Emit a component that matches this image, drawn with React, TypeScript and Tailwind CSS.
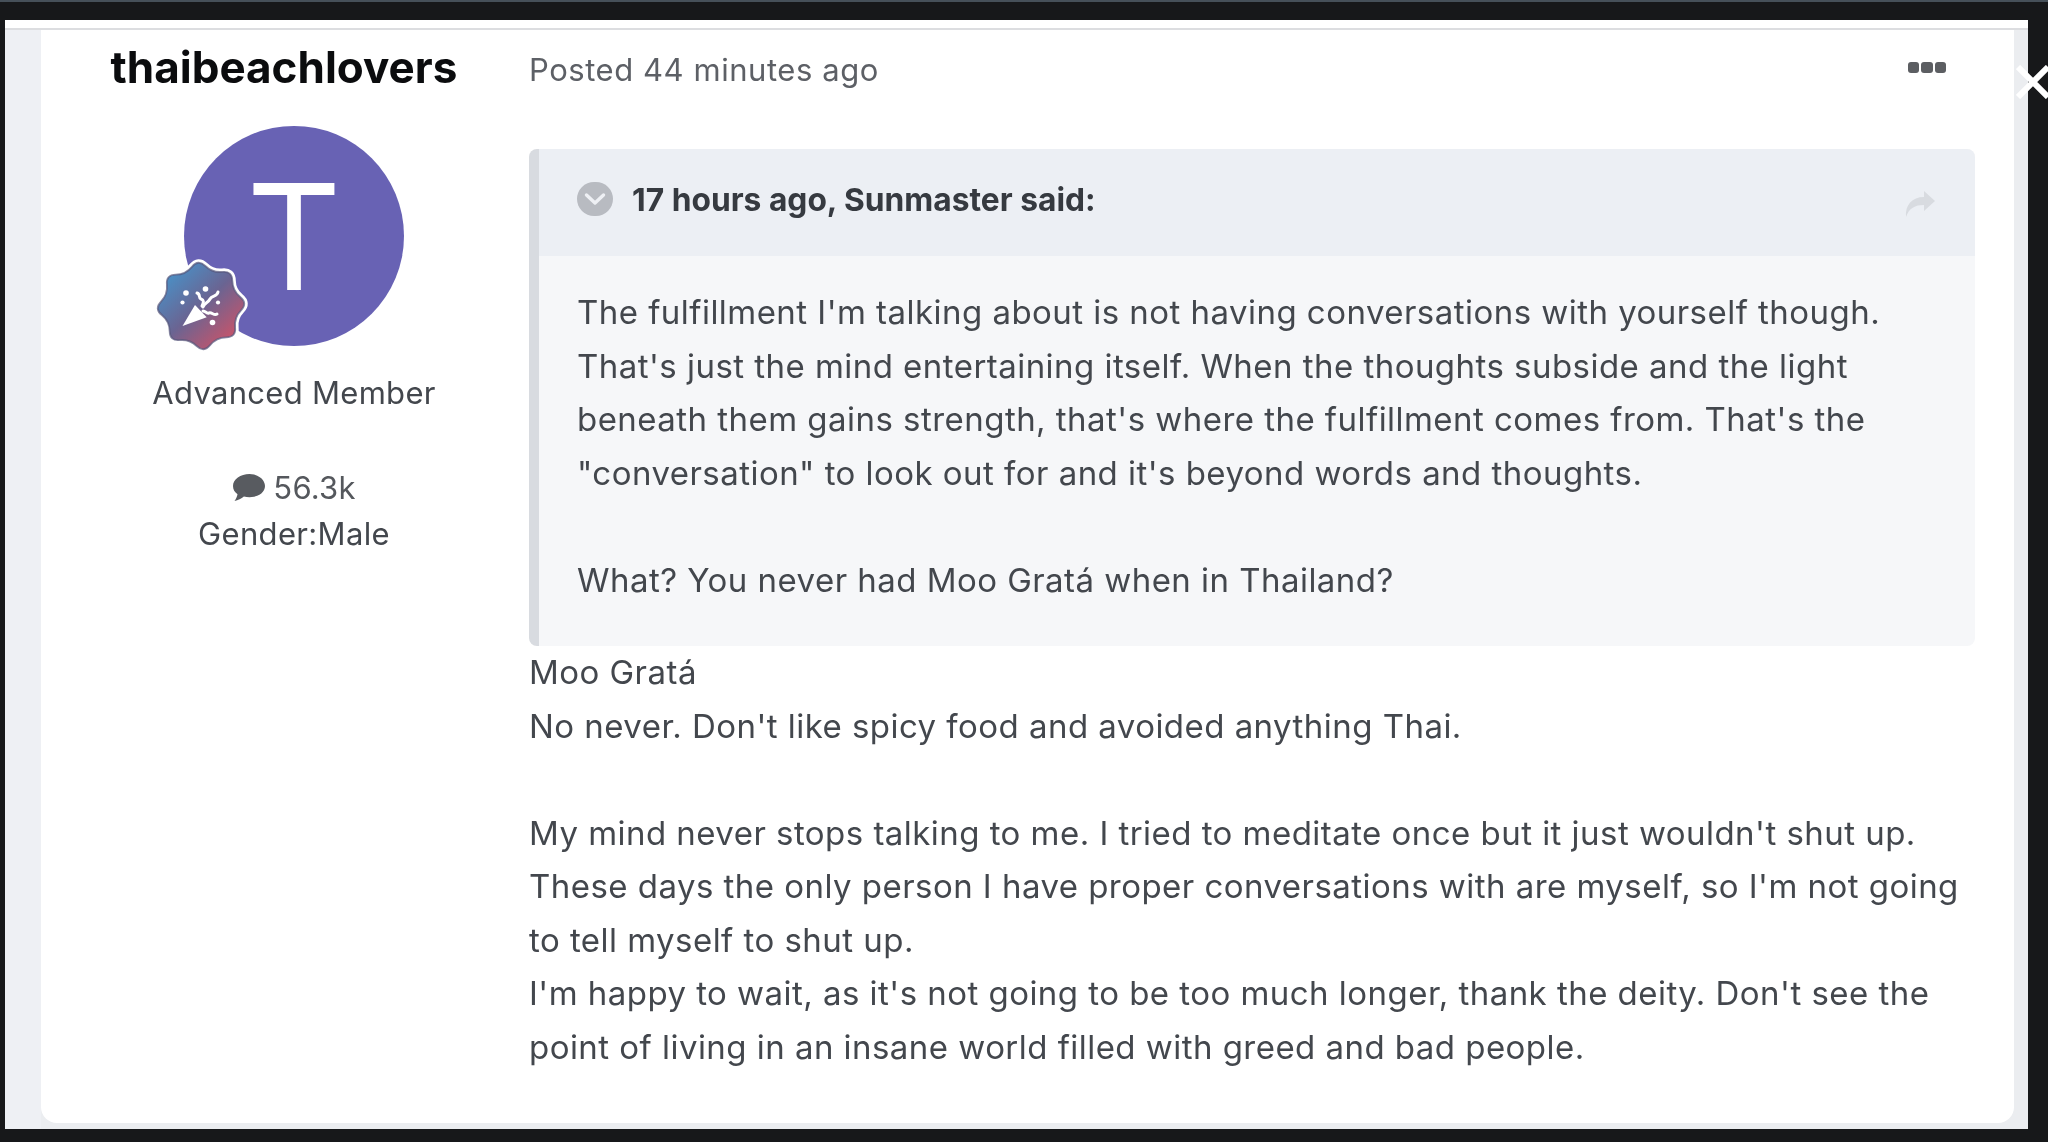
import React from "react";

function wavePath(cx: number, cy: number, outer: number, inner: number, lobes: number, rot: number) {
  const pts: [number, number][] = [];
  for (let i = 0; i < lobes * 2; i++) {
    const r = i % 2 === 0 ? outer : inner;
    const a = rot + (i * Math.PI) / lobes;
    pts.push([cx + r * Math.cos(a), cy + r * Math.sin(a)]);
  }
  const n = pts.length;
  const mid = (a: [number, number], b: [number, number]) => [(a[0] + b[0]) / 2, (a[1] + b[1]) / 2];
  const s = mid(pts[n - 1], pts[0]);
  let d = `M${s[0].toFixed(2)} ${s[1].toFixed(2)}`;
  for (let i = 0; i < n; i++) {
    const m = mid(pts[i], pts[(i + 1) % n]);
    d += `Q${pts[i][0].toFixed(2)} ${pts[i][1].toFixed(2)} ${m[0].toFixed(2)} ${m[1].toFixed(2)}`;
  }
  return d + "Z";
}

function Badge() {
  const d = wavePath(50, 50, 47, 35, 8, -Math.PI / 2 - 0.06);
  return (
    <svg viewBox="0 0 100 100" className="absolute left-[-33px] top-[130px] w-[100px] h-[100px] overflow-visible">
      <defs>
        <linearGradient id="bg" x1="0.12" y1="0.12" x2="0.85" y2="0.9">
          <stop offset="0" stopColor="#4a90c6" />
          <stop offset="0.5" stopColor="#6a6492" />
          <stop offset="1" stopColor="#c8546a" />
        </linearGradient>
      </defs>
      <path d={d} fill="#fff" stroke="#fff" strokeWidth="7" strokeLinejoin="round" />
      <path d={d} fill="url(#bg)" stroke="#55557a" strokeOpacity="0.7" strokeWidth="1.8" />
      <polygon points="31.5,70 44,49 55.7,61.3" fill="#fff" />
      <g fill="none" stroke="#fff" strokeWidth="3" strokeLinecap="round">
        <path d="M46 37c4 1 1 5 4 6s3 3 1 7" />
        <path d="M67 36c-1 5-6 3-8 7s-5 3-7 8" />
        <path d="M66 58c-3 2-5-2-8-1s-3-2-6-2" />
      </g>
      <g fill="#fff">
        <circle cx="35" cy="37" r="2.8" />
        <circle cx="54.5" cy="33" r="2.8" />
        <circle cx="31.5" cy="46.5" r="2.1" />
        <circle cx="61.5" cy="66.5" r="2.8" />
        <circle cx="67" cy="46.5" r="2.1" />
      </g>
    </svg>
  );
}

export default function App() {
  return (
    <div className="relative w-[2048px] h-[1142px] overflow-hidden bg-[#17181a] font-['Inter',sans-serif] text-[#43474d] blur-[0.5px]">
      <div className="h-[2px] bg-[#465059]" />
      <div className="ml-[5px] mt-[18px] w-[2023px] h-[1109px] bg-[#eef0f4] flex flex-col">
        <div className="h-[10px] bg-white border-b-2 border-[#dcdde0]" />
        <div className="flex-1 bg-[#ebedf0] flex">
          <div className="w-[36px] bg-[#eef0f4]" />
          <div className="flex w-[1973px] h-[1093px] bg-white rounded-b-[16px]">
            <aside className="w-[488px] shrink-0 flex flex-col items-center pl-[18px]">
              <h2 className="mt-[12px] ml-[-20px] h-[50px] text-[44px] leading-[50px] font-bold text-[#0b0c0e] whitespace-nowrap">
                thaibeachlovers
              </h2>
              <div className="relative mt-[34px] w-[220px] h-[220px] rounded-full bg-[#6862b4] flex items-center justify-center">
                <span className="text-[147px] leading-none text-white">T</span>
                <Badge />
              </div>
              <div className="mt-[27px] text-[31px] leading-[40px] tracking-[0.3px]">Advanced Member</div>
              <div className="mt-[52px] flex items-center gap-[8px] text-[31px] leading-[46px] tracking-[0.2px] text-[#55585d]">
                <svg viewBox="0 0 33 30" className="w-[33px] h-[30px]">
                  <path
                    d="M17.5 1C8.5 1 1 6 1 13c0 3.4 1.7 6.2 4.5 8.300-.4 2.600-1.500 4.700-3 6.700 3.600-.8 6.900-2.300 9.400-4.500 1.800.4 3.700.7 5.600.7 8.800 0 15.500-4.800 15.500-11.200S26.300 1 17.500 1Z"
                    fill="#585b60"
                  />
                </svg>
                <span>56.3k</span>
              </div>
              <div className="text-[31px] leading-[46px] tracking-[0.35px]">Gender:Male</div>
            </aside>
            <main className="flex-1 min-w-0 pr-[38px]">
              <div className="flex items-center justify-between h-[53px] mt-[14px] pr-[30px]">
                <span className="text-[31px] tracking-[0.55px] text-[#5d6066]">Posted 44 minutes ago</span>
                <div className="flex gap-[2px] mb-[6px]">
                  <span className="w-[11.500px] h-[11px] rounded-[3px] bg-[#5c5e62]" />
                  <span className="w-[11.500px] h-[11px] rounded-[3px] bg-[#5c5e62]" />
                  <span className="w-[11.500px] h-[11px] rounded-[3px] bg-[#5c5e62]" />
                </div>
              </div>
              <blockquote className="mt-[52px] w-[1446px] h-[497px] rounded-[8px] border-l-[10px] border-[#d8dbe0] bg-[#f6f7f9] overflow-hidden">
                <div className="h-[107px] bg-[#eceff4] flex items-center pl-[38px] pr-[39px]">
                  <span className="flex items-center justify-center w-[36px] h-[34px] rounded-full bg-[#b8bbc1] mb-[8px]">
                    <svg viewBox="0 0 24 24" className="w-[24px] h-[24px]" fill="none" stroke="#eef0f4" strokeWidth="3.4" strokeLinecap="round" strokeLinejoin="round">
                      <path d="M3.500 8l8.500 8 8.500-8" />
                    </svg>
                  </span>
                  <span className="ml-[19px] mb-[5px] text-[31.750px] font-bold text-[#363a40] whitespace-nowrap">17 hours ago, Sunmaster said:</span>
                  <svg viewBox="0 0 32 28" className="ml-auto mt-[3px] w-[32px] h-[28px]" fill="#d8dbe0">
                    <path d="M20 1l11 10-11 10v-6C11 15 5 18 2 27 1 15 8 7 20 7V1Z" />
                  </svg>
                </div>
                <div className="pl-[38px] pt-[30px] text-[33px] leading-[53.500px] tracking-[0.46px]">
                  <p className="whitespace-nowrap">
                    The fulfillment I'm talking about is not having conversations with yourself though.
                    <br />
                    That's just the mind entertaining itself. When the thoughts subside and the light
                    <br />
                    beneath them gains strength, that's where the fulfillment comes from. That's the
                    <br />
                    "conversation" to look out for and it's beyond words and thoughts.
                    <br />
                    <br />
                    What? You never had Moo Gratá when in Thailand?
                  </p>
                </div>
              </blockquote>
              <div className="text-[33px] leading-[53.500px] tracking-[0.46px] whitespace-nowrap">
                Moo Gratá
                <br />
                No never. Don't like spicy food and avoided anything Thai.
                <br />
                <br />
                My mind never stops talking to me. I tried to meditate once but it just wouldn't shut up.
                <br />
                These days the only person I have proper conversations with are myself, so I'm not going
                <br />
                to tell myself to shut up.
                <br />
                I'm happy to wait, as it's not going to be too much longer, thank the deity. Don't see the
                <br />
                point of living in an insane world filled with greed and bad people.
              </div>
            </main>
          </div>
        </div>
      </div>
      <svg viewBox="0 0 34 34" className="absolute left-[2016px] top-[65px] w-[34px] h-[34px]" stroke="#fff" strokeWidth="6" strokeLinecap="butt">
        <path d="M2 2l30 30M32 2L2 32" />
      </svg>
    </div>
  );
}
